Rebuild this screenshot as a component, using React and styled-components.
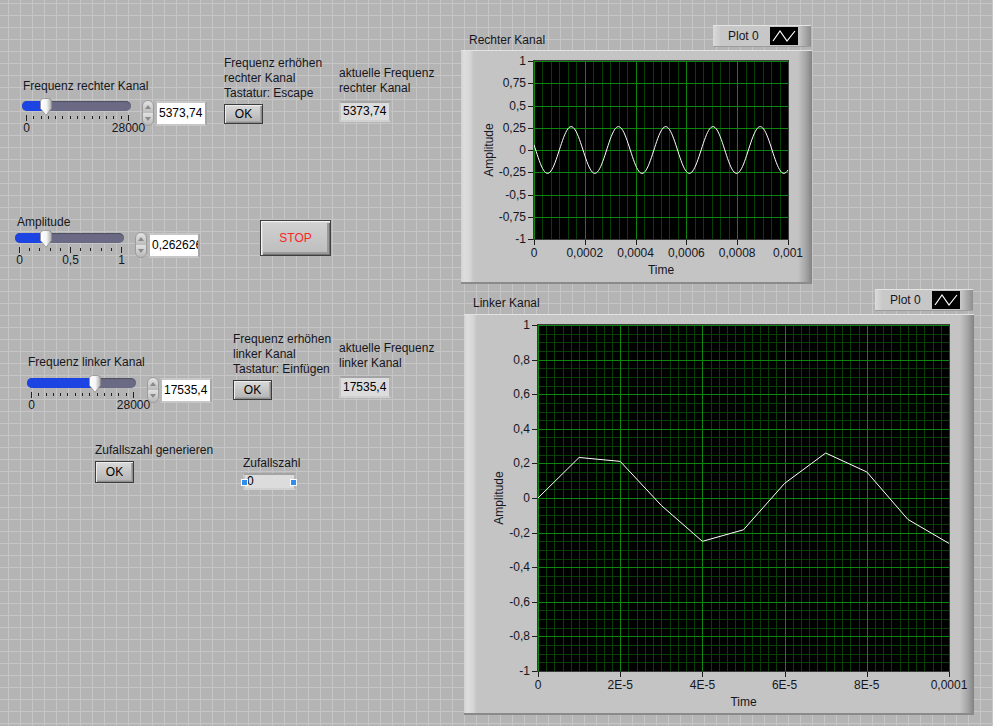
import React from "react";
import styled, { createGlobalStyle } from "styled-components";

const GlobalStyle = createGlobalStyle`
  html, body { margin: 0; padding: 0; }
  body {
    background-color: #b4b4b4;
    font-family: "Liberation Sans", Arial, sans-serif;
  }
`;

const INK = "#16161e";

const Panel = styled.div`
  position: relative;
  width: 993px;
  height: 726px;
  overflow: hidden;
  background-color: #b4b4b4;
  background-image:
    linear-gradient(to right, #c6c6c6 1px, transparent 1px),
    linear-gradient(to bottom, #c6c6c6 1px, transparent 1px);
  background-size: 12px 12px;
  background-position: 8px 3px;
  font-family: "Liberation Sans", Arial, sans-serif;
  font-size: 12px;
  color: ${INK};
`;

// front panel is a free canvas: each control sits where it was dropped
const Place = styled.div`
  position: absolute;
  left: ${(p) => p.$x}px;
  top: ${(p) => p.$y}px;
`;

const Column = styled.div`
  display: flex;
  flex-direction: column;
  align-items: flex-start;
`;

const Caption = styled.div`
  line-height: 15px;
  white-space: nowrap;
  padding-left: ${(p) => p.$pad || 0}px;
`;

const Row = styled.div`
  display: flex;
  align-items: flex-start;
  margin-top: ${(p) => p.$mt}px;
`;

/* ---------- slider ---------- */

const SliderBody = styled.div`
  display: flex;
  flex-direction: column;
  width: 109px;
`;

const Track = styled.div`
  position: relative;
  width: 109px;
  height: 10px;
  margin-top: 1px;
  border-radius: 5px;
  background: #6a6a84;
  box-shadow: inset 0 1px 1px rgba(0, 0, 0, 0.25);
`;

const Fill = styled.div`
  height: 100%;
  border-radius: 5px 0 0 5px;
  background: #1c44e2;
`;

const Knob = styled.svg`
  position: absolute;
  top: -3px;
`;

const TickRow = styled.div`
  display: flex;
  justify-content: space-between;
  align-items: flex-start;
  width: 103px;
  margin: 4px 0 0 4px;
  height: 6px;
`;

const Tick = styled.span`
  width: 1px;
  height: ${(p) => (p.$major ? 6 : 3)}px;
  margin-top: ${(p) => (p.$major ? 0 : 1)}px;
  background: #202020;
`;

const ScaleRow = styled.div`
  display: flex;
  justify-content: space-between;
  width: 103px;
  margin-left: 4px;
  line-height: 15px;
`;

const ScaleLabel = styled.span`
  width: 1px;
  display: flex;
  justify-content: center;
  white-space: nowrap;
`;

const Digital = styled.div`
  display: flex;
  align-items: center;
  margin-left: 11px;
`;

const Spinner = styled.div`
  width: 12px;
  height: 26px;
  box-sizing: border-box;
  border-radius: 6px;
  border: 1px solid #9c9c9c;
  background: linear-gradient(to bottom, #e4e4e4 0%, #bdbdbd 48%, #a8a8a8 50%, #e0e0e0 52%, #b8b8b8 100%);
  display: flex;
  flex-direction: column;
  align-items: center;
  justify-content: space-between;
  padding: 4px 0;
`;

const Arrow = styled.span`
  width: 0;
  height: 0;
  border-left: 3px solid transparent;
  border-right: 3px solid transparent;
  ${(p) => (p.$down ? "border-top: 4px solid #8a8a8a;" : "border-bottom: 4px solid #8a8a8a;")}
`;

const NumField = styled.div`
  width: 52px;
  height: 25px;
  box-sizing: border-box;
  margin-left: 1px;
  border: 2px solid;
  border-color: #c7c7c7 #a6a6a6 #c7c7c7 #b8b8b8;
  background: #fff;
  padding: 0 0 0 2px;
  line-height: 21px;
  white-space: nowrap;
  overflow: hidden;
  color: #000;
`;

const Slider = ({ x, y, pad, label, frac, ticks, majors, scale, value, mt }) => {
  const center = 4 + frac * 102;
  return (
    <Place $x={x} $y={y}>
      <Column>
        <Caption $pad={pad}>{label}</Caption>
        <Row $mt={mt}>
          <SliderBody>
            <Track>
              <Fill style={{ width: center }} />
              <Knob width="12" height="18" viewBox="0 0 12 18" style={{ left: center - 6 }}>
                <defs>
                  <linearGradient id="kn" x1="0" x2="1" y1="0" y2="0">
                    <stop offset="0" stopColor="#ffffff" />
                    <stop offset="0.55" stopColor="#f4f4f4" />
                    <stop offset="1" stopColor="#a9a9a9" />
                  </linearGradient>
                </defs>
                <path
                  d="M0.5 3.5 Q0.5 0.5 3.5 0.5 H8.5 Q11.5 0.5 11.5 3.5 V10.5 L6 17.3 L0.5 10.5 Z"
                  fill="url(#kn)"
                  stroke="#8e8e8e"
                  strokeWidth="0.8"
                />
              </Knob>
            </Track>
            <TickRow>
              {Array.from({ length: ticks }, (_, i) => (
                <Tick key={i} $major={majors.includes(i)} />
              ))}
            </TickRow>
            <ScaleRow>
              {scale.map((s) => (
                <ScaleLabel key={s}>{s}</ScaleLabel>
              ))}
            </ScaleRow>
          </SliderBody>
          <Digital>
            <Spinner>
              <Arrow />
              <Arrow $down />
            </Spinner>
            <NumField>{value}</NumField>
          </Digital>
        </Row>
      </Column>
    </Place>
  );
};

/* ---------- buttons & indicators ---------- */

const Button = styled.div`
  width: ${(p) => p.$w || 39}px;
  height: ${(p) => p.$h || 20}px;
  margin-top: ${(p) => p.$mt || 0}px;
  box-sizing: border-box;
  border: 1px solid #3c3c3c;
  background: linear-gradient(to bottom, #dadada, #c2c2c2 60%, #b2b2b2);
  box-shadow: inset 1px 1px 0 #eeeeee, inset -1px -1px 0 #8c8c8c, inset -2px -2px 0 #a6a6a6;
  display: flex;
  align-items: center;
  justify-content: center;
  color: ${(p) => p.$color || "#000"};
  font-size: 12px;
`;

const StopButton = styled(Button)`
  border-color: #404040;
  box-shadow: inset 1px 1px 0 #f2f2f2, inset 2px 2px 0 #d6d6d6, inset -1px -1px 0 #707070,
    inset -3px -3px 0 #9a9a9a;
  background: linear-gradient(to bottom, #d2d2d2, #bcbcbc);
`;

const Indicator = styled.div`
  position: relative;
  width: ${(p) => p.$w || 52}px;
  height: ${(p) => p.$h || 21}px;
  margin-top: ${(p) => p.$mt || 0}px;
  box-sizing: border-box;
  border: 2px solid;
  border-color: #a4a4a4 #b4b4b4 #d0d0d0 #c4c4c4;
  background: #dcdcdc;
  padding-left: 2px;
  line-height: ${(p) => (p.$h || 21) - 4}px;
  color: #000;
  white-space: nowrap;
`;

const Handle = styled.span`
  position: absolute;
  top: 50%;
  width: 5px;
  height: 5px;
  margin-top: -3px;
  background: #2f8ff0;
  border: 1px solid #ffffff;
  ${(p) => (p.$right ? "right: -3px;" : "left: -4px;")}
`;

/* ---------- graphs ---------- */

const GraphHead = styled.div`
  display: flex;
  justify-content: space-between;
  align-items: flex-end;
  width: ${(p) => p.$w}px;
  height: 25px;
`;

const GraphTitle = styled.div`
  line-height: 15px;
  padding-left: ${(p) => p.$pad}px;
  margin-bottom: ${(p) => p.$mb}px;
  white-space: nowrap;
`;

const Legend = styled.div`
  width: 98px;
  height: 22px;
  box-sizing: border-box;
  margin: 0 ${(p) => p.$mr}px 3px 0;
  padding: 0 13px 0 15px;
  display: flex;
  align-items: center;
  justify-content: space-between;
  border-top: 1px solid #e4e4e4;
  border-bottom: 1px solid #9c9c9c;
  background: linear-gradient(to right, #dadada, #c8c8c8 8px, #c6c6c6 calc(100% - 12px), #8e8e8e);
`;

const Swatch = styled.svg`
  display: block;
  background: #000;
`;

const Frame = styled.div`
  width: ${(p) => p.$w}px;
  height: ${(p) => p.$h}px;
  border-top: 1px solid #e2e2e2;
  border-bottom: 2px solid #8a8a8a;
  background: linear-gradient(
    to right,
    #d0d0d0 0px,
    #dedede 3px,
    #d6d6d6 9px,
    #c4c4c4 13px,
    #c4c4c4 calc(100% - 14px),
    #a4a4a4 calc(100% - 6px),
    #828282 100%
  );
`;

const ChartSvg = styled.svg`
  display: block;
  font-family: "Liberation Sans", Arial, sans-serif;
  font-size: 12px;
`;

const Chart = ({ w, h, plot, yTicks, xTicks, minorX, minorY, points, yTitleX }) => {
  const { l, t, pw, ph } = plot;
  const b = t + ph;
  const r = l + pw;
  const px = (v) => Math.round(v) + 0.5;
  const minorV = [];
  const nx = (xTicks.length - 1) * minorX;
  for (let i = 1; i < nx; i++) if (i % minorX) minorV.push(px(l + (pw * i) / nx));
  const minorH = [];
  const ny = (yTicks.length - 1) * minorY;
  for (let i = 1; i < ny; i++) if (i % minorY) minorH.push(px(t + (ph * i) / ny));
  const majX = xTicks.map((_, i) => l + (pw * i) / (xTicks.length - 1));
  const majY = yTicks.map((_, i) => t + (ph * i) / (yTicks.length - 1));
  const poly = points
    .map(([fx, v]) => `${(l + fx * pw).toFixed(2)},${(t + ((1 - v) / 2) * ph).toFixed(2)}`)
    .join(" ");

  return (
    <ChartSvg width={w} height={h}>
      <rect x={l} y={t} width={pw} height={ph} fill="#000" />
      <g shapeRendering="crispEdges" strokeWidth="1">
        {minorV.map((xx) => (
          <line key={"mv" + xx} x1={xx} x2={xx} y1={t} y2={b} stroke="#073f07" />
        ))}
        {minorH.map((yy) => (
          <line key={"mh" + yy} x1={l} x2={r} y1={yy} y2={yy} stroke="#073f07" />
        ))}
        {majX.map((xx, i) => (
          <line key={"Mv" + i} x1={px(xx)} x2={px(xx)} y1={t} y2={b} stroke="#0d860d" />
        ))}
        {majY.map((yy, i) => (
          <line key={"Mh" + i} x1={l} x2={r} y1={px(yy)} y2={px(yy)} stroke="#0d860d" />
        ))}
      </g>
      <polyline points={poly} fill="none" stroke="#ffffff" strokeWidth="1" />
      <rect x={l - 0.5} y={t - 0.5} width={pw + 1} height={ph + 1} fill="none" stroke="#3a3a3a" />
      <g stroke="#1e1e1e" shapeRendering="crispEdges">
        {majY.map((yy, i) => (
          <line key={"ty" + i} x1={l - 6} x2={l - 1} y1={px(yy)} y2={px(yy)} />
        ))}
        {majX.map((xx, i) => (
          <line key={"tx" + i} x1={px(xx)} x2={px(xx)} y1={b + 1} y2={b + 6} />
        ))}
      </g>
      <g fill={INK}>
        {yTicks.map((s, i) => (
          <text key={"ly" + i} x={l - 8} y={majY[i] + 4} textAnchor="end">
            {s}
          </text>
        ))}
        {xTicks.map((s, i) => (
          <text key={"lx" + i} x={majX[i]} y={b + 18} textAnchor="middle">
            {s}
          </text>
        ))}
        <text x={l + pw / 2} y={b + 35} textAnchor="middle">
          Time
        </text>
        <text
          x={0}
          y={0}
          textAnchor="middle"
          transform={`translate(${yTitleX + 4} ${t + ph / 2}) rotate(-90)`}
        >
          Amplitude
        </text>
      </g>
    </ChartSvg>
  );
};

const Graph = ({ x, y, title, pad, mb, mr, w, h, ...chart }) => (
  <Place $x={x} $y={y}>
    <GraphHead $w={w}>
      <GraphTitle $pad={pad} $mb={mb}>
        {title}
      </GraphTitle>
      <Legend $mr={mr}>
        <span>Plot 0</span>
        <Swatch width="28" height="18" viewBox="0 0 28 18">
          <polyline points="3,14 10,4 17,14 25,4" fill="none" stroke="#fff" strokeWidth="1.2" />
        </Swatch>
      </Legend>
    </GraphHead>
    <Frame $w={w} $h={h}>
      <Chart w={w} h={h - 3} {...chart} />
    </Frame>
  </Place>
);

/* ---------- data ---------- */

const AMP = 0.262626;

const rightWave = Array.from({ length: 241 }, (_, i) => {
  const fx = i / 240;
  const tt = fx * 0.001;
  return [fx, AMP * Math.sin(2 * Math.PI * 5373.74 * tt - 3.37)];
});

const leftWave = Array.from({ length: 11 }, (_, n) => [
  n / 10,
  AMP * Math.sin(2 * Math.PI * 17535.4 * n * 1e-5),
]);

const App = () => (
  <>
    <GlobalStyle />
    <Panel>
      <Slider
        x={22}
        y={79}
        pad={1}
        mt={6}
        label="Frequenz rechter Kanal"
        frac={5373.74 / 28000}
        ticks={15}
        majors={[0, 14]}
        scale={["0", "28000"]}
        value="5373,74"
      />

      <Place $x={224} $y={56}>
        <Column>
          <Caption>Frequenz erhöhen</Caption>
          <Caption>rechter Kanal</Caption>
          <Caption>Tastatur: Escape</Caption>
          <Button $mt={3}>OK</Button>
        </Column>
      </Place>

      <Place $x={339} $y={66}>
        <Column>
          <Caption>aktuelle Frequenz</Caption>
          <Caption>rechter Kanal</Caption>
          <Indicator $mt={5}>5373,74</Indicator>
        </Column>
      </Place>

      <Slider
        x={15}
        y={215}
        pad={2}
        mt={2}
        label="Amplitude"
        frac={AMP}
        ticks={11}
        majors={[0, 5, 10]}
        scale={["0", "0,5", "1"]}
        value="0,262626"
      />

      <Place $x={260} $y={220}>
        <StopButton $w={71} $h={36} $color="#ff2424">
          STOP
        </StopButton>
      </Place>

      <Slider
        x={27}
        y={355}
        pad={1}
        mt={7}
        label="Frequenz linker Kanal"
        frac={17535.4 / 28000}
        ticks={15}
        majors={[0, 14]}
        scale={["0", "28000"]}
        value="17535,4"
      />

      <Place $x={233} $y={332}>
        <Column>
          <Caption>Frequenz erhöhen</Caption>
          <Caption>linker Kanal</Caption>
          <Caption>Tastatur: Einfügen</Caption>
          <Button $mt={3}>OK</Button>
        </Column>
      </Place>

      <Place $x={339} $y={341}>
        <Column>
          <Caption>aktuelle Frequenz</Caption>
          <Caption>linker Kanal</Caption>
          <Indicator $mt={5} $h={22}>
            17535,4
          </Indicator>
        </Column>
      </Place>

      <Place $x={95} $y={443}>
        <Column>
          <Caption>Zufallszahl generieren</Caption>
          <Button $mt={3} $h={22}>
            OK
          </Button>
        </Column>
      </Place>

      <Place $x={243} $y={456}>
        <Column>
          <Caption>Zufallszahl</Caption>
          <Indicator $mt={2} $w={53} $h={17}>
            0
            <Handle />
            <Handle $right />
          </Indicator>
        </Column>
      </Place>

      <Graph
        x={461}
        y={25}
        w={351}
        h={231}
        title="Rechter Kanal"
        pad={8}
        mb={2}
        mr={1}
        plot={{ l: 73, t: 10, pw: 254, ph: 178 }}
        yTicks={["1", "0,75", "0,5", "0,25", "0", "-0,25", "-0,5", "-0,75", "-1"]}
        xTicks={["0", "0,0002", "0,0004", "0,0006", "0,0008", "0,001"]}
        minorX={6}
        minorY={1}
        points={rightWave}
        yTitleX={28}
      />

      <Graph
        x={464}
        y={289}
        w={510}
        h={398}
        title="Linker Kanal"
        pad={9}
        mb={3}
        mr={1}
        plot={{ l: 74, t: 10, pw: 411, ph: 346 }}
        yTicks={["1", "0,8", "0,6", "0,4", "0,2", "0", "-0,2", "-0,4", "-0,6", "-0,8", "-1"]}
        xTicks={["0", "2E-5", "4E-5", "6E-5", "8E-5", "0,0001"]}
        minorX={10}
        minorY={4}
        points={leftWave}
        yTitleX={35}
      />
    </Panel>
  </>
);

export default App;
